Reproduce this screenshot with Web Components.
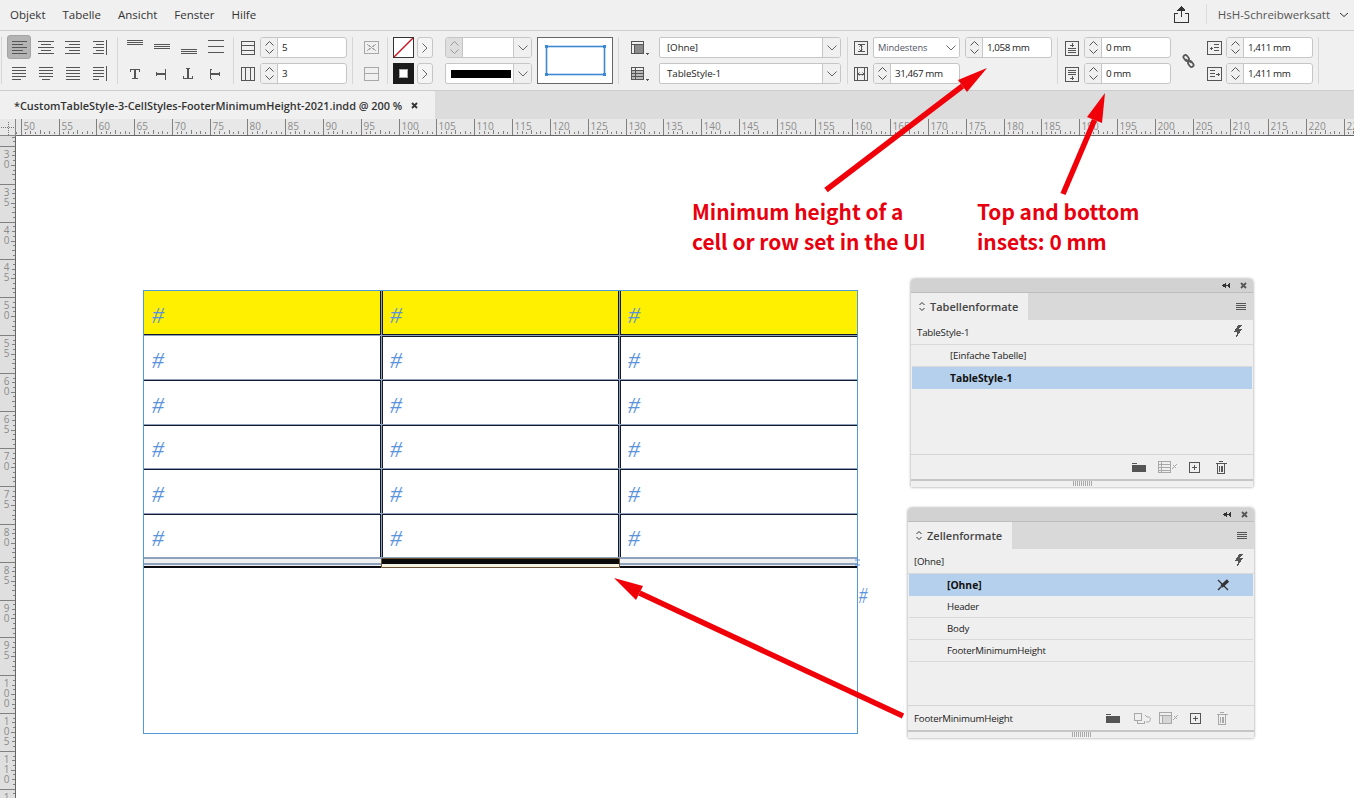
<!DOCTYPE html>
<html lang="de">
<head>
<meta charset="utf-8">
<title>InDesign</title>
<style>
  html, body { margin: 0; padding: 0; height: 100%; overflow: hidden; background: #fff; }
  body { font-family: "Open Sans", "Liberation Sans", sans-serif; font-size: 11px; color: #222; }
</style>
</head>
<body>
<id-app></id-app>
<script>
const bars = rows => `<path d="${rows.map(([a, b, y]) => `M${a} ${y}H${b}`).join('')}"/>`
const ys = [4.5, 7.5, 10.5, 13.5, 16.5]
const alt = (a1, b1, a2, b2) => bars(ys.map((y, i) => i % 2 ? [a2, b2, y] : [a1, b1, y]))
const just = (a, b, la, lb) => bars(ys.map((y, i) => i === 4 ? [la, lb, y] : [a, b, y]))
const chev = (d) => `<path style="shape-rendering:auto" d="${d}"/>`

const icons = {
  'al-left': alt(6, 21, 6, 17),
  'al-center': alt(5, 21, 8, 18),
  'al-right': alt(5, 20, 9, 20),
  'al-spine': alt(6, 17, 9, 17) + '<path d="M19.5 3V18"/>',
  'ju-left': just(6, 20, 6, 15),
  'ju-center': just(6, 20, 9, 17),
  'ju-all': just(6, 20, 6, 20),
  'ju-spine': just(6, 17, 6, 12) + '<path d="M19.5 3V18"/>',
  'va-top': bars([[5, 21, 3.5], [5, 21, 5.5], [5, 21, 7.5]]),
  'va-mid': bars([[5, 21, 7.5], [5, 21, 9.5], [5, 21, 11.5]]),
  'va-bot': bars([[5, 21, 12.5], [5, 21, 14.5], [5, 21, 16.5]]),
  'va-just': bars([[5, 21, 3.5], [5, 21, 9.5], [5, 21, 15.5]]),
  'rot-0': '<path stroke-width="1.6" d="M8 6.5H18M13 6.5V15"/><path d="M10 15.5H16M8.5 6V9M17.5 6V9"/>',
  'rot-90': '<path stroke-width="1.6" d="M8 11H17"/><path d="M16.5 6V16M7.5 9V13M16 6H17M16 16H17"/>',
  'rot-180': '<path stroke-width="1.6" d="M12 6V15"/><path d="M7 15.5H17M10 5.5H14M7.5 13V15M16.5 13V15"/>',
  'rot-270': '<path stroke-width="1.6" d="M8 11H17"/><path d="M7.5 6V16M16.5 9V13M8 6H9M8 16H9"/>',
  rows: '<path d="M5.5 4.5H18.5V17.5H5.5ZM5.5 8.5H18.5M5.5 13.5H18.5"/>',
  cols: '<path d="M5.5 4.5H18.5V17.5H5.5ZM9.5 4.5V17.5M14.5 4.5V17.5"/>',
  merge: '<path d="M11.5 4.5H25.5V16.5H11.5ZM14 7L23 14M23 7L14 14"/>',
  split: '<path d="M11.5 4.5H25.5V17.5H11.5ZM11.5 10.5H25.5"/>',
  'cell-style': '<path d="M5.5 4.5H17.5V16.5H5.5ZM5.5 7.5H17.5M8.5 7.5V16.5"/><rect x="9" y="8" width="8" height="8" fill="currentColor" opacity=".65" stroke="none"/><path d="M20 16.5H23M21 17.5H22"/>',
  'table-style': '<path d="M5.5 4.5H17.5V16.5H5.5ZM5.5 7.5H17.5M5.5 10.5H17.5M5.5 13.5H17.5M9.5 4.5V16.5"/><rect x="6" y="8" width="11" height="8" fill="currentColor" opacity=".35" stroke="none"/><path d="M20 16.5H23M21 17.5H22"/>',
  'row-h': '<path d="M1.5 4.5H14.5V17.5H1.5ZM4.5 7.5H11.5M4.5 14.5H11.5M8 8V14"/><path style="shape-rendering:auto" d="M6.5 9.5L8 8L9.5 9.5M6.5 12.5L8 14L9.5 12.5"/>',
  'col-w': '<path d="M1.5 4.5H14.5V17.5H1.5ZM4.5 4.5V17.5M11.5 4.5V17.5M5 11H11"/><path style="shape-rendering:auto" d="M6.5 9.5L5 11L6.5 12.5M9.5 9.5L11 11L9.5 12.5"/>',
  'in-top': '<path d="M2.5 4.5H15.5V18.5H2.5ZM5 11.5H13M5 13.5H13M5 15.5H13M7 8H11M9 6V10"/>',
  'in-bot': '<path d="M2.5 4.5H15.5V18.5H2.5ZM5 7.5H13M5 9.5H13M5 11.5H13M7 15H11M9 13V17"/>',
  'in-left': '<path d="M2.5 4.5H16.5V17.5H2.5ZM9 7.5H14M9 10.5H14M9 13.5H14M4.5 11H8M6 9.5V12.5"/>',
  'in-right': '<path d="M2.5 4.5H16.5V17.5H2.5ZM5 7.5H10M5 10.5H10M5 13.5H10M11 11H15M13 9.5V12.5"/>',
  link: '<g style="shape-rendering:auto" stroke-width="1.7"><g transform="rotate(-38 6.5 8)"><rect x="4.5" y="1" width="4" height="6.5" rx="2"/><rect x="4.5" y="8.5" width="4" height="6.5" rx="2"/></g><path stroke-width="1.2" d="M3.5 6L9.5 10"/></g>',
  share: '<g stroke-width="1.6"><path d="M5 7.5H1.5V16.5H15.5V7.5H12M8.5 11V1.5"/></g><path fill="currentColor" stroke="none" d="M8.5 0L12.5 4.5H4.5Z"/>',
  'chev-d': chev('M1 1L5 4.5L9 1'),
  updown: chev('M1.5 4L4 1.5L6.5 4M1.5 7L4 9.5L6.5 7'),
  collapse: '<path fill="currentColor" stroke="none" d="M3.5 0L0 2.5L3.5 5ZM8 0L4.5 2.5L8 5Z"/>',
  close: '<path style="shape-rendering:auto" stroke-width="1.8" d="M1 1L6 6M6 1L1 6"/>',
  menu: '<path d="M0 .5H10M0 2.5H10M0 4.5H10M0 6.5H10"/>',
  bolt: '<path fill="currentColor" stroke="none" d="M5 0L9 0L6.5 3.5L9.5 3.5L2.5 14L4.5 7L1 7Z"/>',
  'pen-x': '<path style="shape-rendering:auto" stroke-width="1.2" d="M1 1L11 11"/><path style="shape-rendering:auto" stroke-width="3.2" d="M11 1.5L4.5 7.5"/><path style="shape-rendering:auto" stroke-width="1.4" d="M4.5 7.5L1 11"/>',
  folder: '<path fill="currentColor" stroke="none" d="M1 3H15V10H1Z"/><path d="M1 1.5H6"/>',
  'clear-t': '<path d="M.5 .5H12.5V11.5H.5ZM.5 3.5H12.5M.5 6.5H12.5M.5 9.5H12.5M3.5 .5V11.5"/><path style="shape-rendering:auto" d="M14 8L19 3M15 4L18 7"/>',
  'clear-c': '<path d="M.5 .5H12.5V11.5H.5ZM.5 3.5H12.5M3.5 3.5V11.5"/><rect x="4" y="4" width="8" height="7" fill="currentColor" opacity=".35" stroke="none"/><path style="shape-rendering:auto" d="M14 8L19 3M15 4L18 7"/>',
  undo: '<path d="M.5 .5H7.5V7.5H.5ZM3.5 7.5V10.5H10.5V7.5"/><path style="shape-rendering:auto" d="M11 2L13 4L15 4C17 4 17 9 14 9H12"/>',
  plus: '<path d="M.5 .5H10.5V10.5H.5ZM3 5.5H8M5.5 3V8"/>',
  trash: '<path d="M.5 2.5H11.5M2.5 2.5V12.5H9.5V2.5M4 .5H8M4.5 4.5V10.5M6 4.5V10.5M7.5 4.5V10.5"/>'
}

customElements.define('id-icon', class extends HTMLElement {
  constructor() {
    super()
    const w = this.getAttribute('w') || 27
    const h = this.getAttribute('h') || 21
    this.attachShadow({ mode: 'open' })
    this.shadowRoot.innerHTML = `
    <style>
      :host { display: block; position: relative; width: ${w}px; height: ${h}px; color: #555; }
      :host([dim]) { color: #a8a8a8; }
      :host([dark]) { color: #333; }
      :host([active])::before {
        content: ""; position: absolute; left: 1px; top: -2px; width: 24px; height: 24px;
        background: #b4b4b4; border: 1px solid #a4a4a4; border-radius: 3px; box-sizing: border-box;
      }
      svg { position: absolute; left: 0; top: 0; display: block; overflow: visible; fill: none; stroke: currentColor; stroke-width: 1; shape-rendering: crispEdges; }
    </style>
    <svg width="${w}" height="${h}" viewBox="0 0 ${w} ${h}">${icons[this.getAttribute('name')] || ''}</svg>`
  }
})

customElements.define('id-spin', class extends HTMLElement {
  constructor() {
    super()
    this.attachShadow({ mode: 'open' })
    const drop = this.hasAttribute('drop') ? '<div class="d"><svg width="10" height="6" viewBox="0 0 10 6"><path d="M.5 .5L5 5L9.5 .5"/></svg></div>' : ''
    this.shadowRoot.innerHTML = `
    <style>
      :host { display: flex; width: 87px; height: 21px; box-sizing: border-box; border: 1px solid #c6c6c6; border-radius: 3px; background: #fff; overflow: hidden; }
      .s { width: 16px; flex: none; background: #f0f0f0; border-right: 1px solid #c6c6c6; display: flex; flex-direction: column; align-items: center; justify-content: center; gap: 3px; color: #555; }
      :host([disabled]) .s { background: #dedede; color: #999; }
      .s svg { display: block; fill: none; stroke: currentColor; }
      .v { flex: 1; padding-left: 4px; font: 500 9.8px/19px "Open Sans", sans-serif; letter-spacing: -.4px; color: #222; white-space: nowrap; }
      .d { width: 17px; flex: none; background: #f0f0f0; border-left: 1px solid #c6c6c6; display: grid; place-items: center; }
      .d svg { display: block; fill: none; stroke: #666; }
    </style>
    <div class="s">
      <svg width="9" height="5" viewBox="0 0 9 5"><path d="M.5 4.5L4.5 .5L8.5 4.5"/></svg>
      <svg width="9" height="5" viewBox="0 0 9 5"><path d="M.5 .5L4.5 4.5L8.5 .5"/></svg>
    </div>
    <div class="v">${this.getAttribute('value') || ''}</div>${drop}`
  }
})

customElements.define('id-select', class extends HTMLElement {
  constructor() {
    super()
    this.attachShadow({ mode: 'open' })
    this.shadowRoot.innerHTML = `
    <style>
      :host { display: flex; height: 21px; box-sizing: border-box; border: 1px solid #c6c6c6; border-radius: 2px 3px 3px 2px; background: #fff; overflow: hidden; }
      .v { flex: 1; padding-left: var(--pad, 7px); font: var(--size, 9.8px)/19px "Open Sans", sans-serif; letter-spacing: -.1px; color: var(--ink, #222); white-space: nowrap; display: flex; align-items: center; }
      .d { width: 17px; flex: none; background: #f0f0f0; border-left: 1px solid #c6c6c6; display: grid; place-items: center; }
      :host([plain]) .d { border-left: 0; background: #fff; }
      svg { display: block; fill: none; stroke: #666; }
    </style>
    <div class="v"><slot>${this.getAttribute('value') || ''}</slot></div>
    <div class="d"><svg width="10" height="6" viewBox="0 0 10 6"><path d="M.5 .5L5 5L9.5 .5"/></svg></div>`
  }
})

customElements.define('id-group', class extends HTMLElement {
  constructor() {
    super()
    this.attachShadow({ mode: 'open' })
    this.shadowRoot.innerHTML = `
    <style>
      :host { display: grid; grid-template-rows: 21px 21px; row-gap: 5px; flex: none; box-sizing: border-box; height: 47px; border-left: 1px solid #d6d6d6; align-items: center; }
    </style>
    <slot></slot>`
    this.style.gridTemplateColumns = this.getAttribute('cols')
    this.style.paddingLeft = (this.getAttribute('pad') || 0) + 'px'
    this.style.width = this.getAttribute('w') + 'px'
    this.style.columnGap = (this.getAttribute('gap') || 0) + 'px'
  }
})

customElements.define('id-menubar', class extends HTMLElement {
  constructor() {
    super()
    this.attachShadow({ mode: 'open' })
    this.shadowRoot.innerHTML = `
    <style>
      :host { display: flex; align-items: center; height: 31px; box-sizing: border-box; background: #f0f0f0; border-bottom: 1px solid #cdcdcd; padding: 0 0 2px 10px; font-size: 11.5px; color: #333; }
      nav { display: flex; gap: 17px; }
      .right { margin-left: auto; display: flex; align-items: center; height: 100%; color: #555; }
      .sep { width: 1px; height: 20px; background: #dcdcdc; margin: 0 11px 0 16px; }
      .chev { margin: 1px 5px 0 9px; }
    </style>
    <nav><slot></slot></nav>
    <div class="right">
      <id-icon name="share" w="17" h="17" dark></id-icon>
      <div class="sep"></div>
      <span>HsH-Schreibwerksatt</span>
      <id-icon class="chev" name="chev-d" w="10" h="6" dark></id-icon>
    </div>`
  }
})

customElements.define('id-swatch', class extends HTMLElement {
  constructor() {
    super()
    this.attachShadow({ mode: 'open' })
    const none = this.hasAttribute('none')
    this.shadowRoot.innerHTML = `
    <style>
      :host { display: block; width: 21px; height: 21px; }
      svg { display: block; }
    </style>
    <svg width="21" height="21" viewBox="0 0 21 21">${none
      ? '<rect x=".5" y=".5" width="20" height="20" fill="#fff" stroke="#333"/><path d="M1 20L20 1" stroke="#c8141e" stroke-width="1.4"/>'
      : '<rect width="21" height="21" fill="#1a1a1a"/><rect x="6.5" y="6.5" width="8" height="8" fill="#fff" stroke="#aaa"/>'}</svg>`
  }
})

customElements.define('id-more', class extends HTMLElement {
  constructor() {
    super()
    this.attachShadow({ mode: 'open' })
    this.shadowRoot.innerHTML = `
    <style>
      :host { display: grid; place-items: center; width: 16px; height: 21px; box-sizing: border-box; border: 1px solid #c6c6c6; border-radius: 3px; background: #f4f4f4; }
      svg { display: block; fill: none; stroke: #666; }
    </style>
    <svg width="6" height="10" viewBox="0 0 6 10"><path d="M.5 .5L5 5L.5 9.5"/></svg>`
  }
})

customElements.define('id-preview', class extends HTMLElement {
  constructor() {
    super()
    this.attachShadow({ mode: 'open' })
    this.shadowRoot.innerHTML = `
    <style>
      :host { display: block; width: 76px; height: 47px; box-sizing: border-box; border: 1px solid #666; background: #fff; }
      svg { display: block; }
    </style>
    <svg width="74" height="45" viewBox="0 0 74 45">
      <rect x="8.5" y="8.5" width="58" height="28" fill="none" stroke="#3e88d2" stroke-width="1.6"/>
      <g fill="#3e88d2"><rect x="7" y="7" width="3" height="3"/><rect x="65" y="7" width="3" height="3"/><rect x="7" y="35" width="3" height="3"/><rect x="65" y="35" width="3" height="3"/></g>
    </svg>`
  }
})

customElements.define('id-controlbar', class extends HTMLElement {
  constructor() {
    super()
    this.attachShadow({ mode: 'open' })
    this.shadowRoot.innerHTML = `
    <style>
      :host { display: flex; height: 60px; box-sizing: border-box; padding: 6px 0 0 1px; background: #f0f0f0; border-bottom: 1px solid #cdcdcd; }
      .stroke-bar { display: block; margin-left: -2px; width: 60px; height: 8px; background: #000; }
    </style>
    <id-group w="116" pad="4" cols="repeat(4, 27px)">
      <id-icon name="al-left" active></id-icon><id-icon name="al-center"></id-icon><id-icon name="al-right"></id-icon><id-icon name="al-spine"></id-icon>
      <id-icon name="ju-left"></id-icon><id-icon name="ju-center"></id-icon><id-icon name="ju-all"></id-icon><id-icon name="ju-spine"></id-icon>
    </id-group>
    <id-group w="116" pad="4" cols="repeat(4, 27px)">
      <id-icon name="va-top"></id-icon><id-icon name="va-mid"></id-icon><id-icon name="va-bot"></id-icon><id-icon name="va-just"></id-icon>
      <id-icon name="rot-0"></id-icon><id-icon name="rot-90"></id-icon><id-icon name="rot-180"></id-icon><id-icon name="rot-270"></id-icon>
    </id-group>
    <id-group w="119" pad="2" gap="2" cols="22px 87px">
      <id-icon name="rows" w="22"></id-icon><id-spin value="5"></id-spin>
      <id-icon name="cols" w="22"></id-icon><id-spin value="3"></id-spin>
    </id-group>
    <id-group w="35" cols="34px">
      <id-icon name="merge" w="34" dim></id-icon>
      <id-icon name="split" w="34" dim></id-icon>
    </id-group>
    <id-group w="231" pad="5" cols="21px 3px 16px 12px 87px 5px 76px">
      <id-swatch none style="grid-area:1 / 1"></id-swatch>
      <id-more style="grid-area:1 / 3"></id-more>
      <id-spin disabled drop style="grid-area:1 / 5"></id-spin>
      <id-preview style="grid-area:1 / 7 / 3 / 8"></id-preview>
      <id-swatch style="grid-area:2 / 1"></id-swatch>
      <id-more style="grid-area:2 / 3"></id-more>
      <id-select style="grid-area:2 / 5"><span class="stroke-bar"></span></id-select>
    </id-group>
    <id-group w="229" pad="7" gap="9" cols="24px 182px">
      <id-icon name="cell-style" w="24"></id-icon><id-select value="[Ohne]"></id-select>
      <id-icon name="table-style" w="24"></id-icon><id-select value="TableStyle-1"></id-select>
    </id-group>
    <id-group w="210" pad="5" cols="20px 92px 87px">
      <id-icon name="row-h" w="16"></id-icon><id-select value="Mindestens" plain style="width:87px;--pad:4px;--ink:#556;--size:9.3px"></id-select><id-spin value="1,058 mm"></id-spin>
      <id-icon name="col-w" w="16"></id-icon><id-spin value="31,467 mm"></id-spin>
    </id-group>
    <id-group w="261" pad="5" gap="3" cols="18px 87px 28px 18px 87px">
      <id-icon name="in-top" w="18" style="grid-area:1 / 1"></id-icon><id-spin value="0 mm" style="grid-area:1 / 2"></id-spin>
      <id-icon name="link" w="13" h="16" style="grid-area:1 / 3 / 3 / 4;justify-self:center"></id-icon>
      <id-icon name="in-left" w="18" style="grid-area:1 / 4"></id-icon><id-spin value="1,411 mm" style="grid-area:1 / 5"></id-spin>
      <id-icon name="in-bot" w="18" style="grid-area:2 / 1"></id-icon><id-spin value="0 mm" style="grid-area:2 / 2"></id-spin>
      <id-icon name="in-right" w="18" style="grid-area:2 / 4"></id-icon><id-spin value="1,411 mm" style="grid-area:2 / 5"></id-spin>
    </id-group>
    <id-group w="1" cols="1px"></id-group>`
  }
})

customElements.define('id-tabbar', class extends HTMLElement {
  constructor() {
    super()
    this.attachShadow({ mode: 'open' })
    this.shadowRoot.innerHTML = `
    <style>
      :host { display: flex; height: 28px; background: #dcdcdc; }
      .tab { width: 435px; box-sizing: border-box; padding-left: 14px; background: #f0f0f0; display: flex; align-items: center; font: 600 10.9px "Open Sans", sans-serif; color: #333; white-space: nowrap; }
      id-icon { margin-left: 9px; }
    </style>
    <div class="tab"><slot></slot><id-icon name="close" w="7" h="7" dark></id-icon></div>`
  }
})

customElements.define('id-ruler', class extends HTMLElement {
  constructor() {
    super()
    this.attachShadow({ mode: 'open' })
    const vertical = this.hasAttribute('vertical')
    const start = +this.getAttribute('start')
    const first = +this.getAttribute('first')
    const count = +this.getAttribute('count')
    const step = 37.8
    let ticks = ''
    let labels = ''
    for (let k = -1; k < count; k++) {
      const pos = Math.round(first + k * step) + .5
      if (vertical) {
        ticks += `M0 ${pos}H16`
        if (k >= 0) labels += `<text class="v" x="6.5" y="${pos}">${start + k * 5}</text>`
      } else {
        ticks += `M${pos} 0V16`
        if (k >= 0) labels += `<text x="${pos + 2}" y="10.5">${start + k * 5}</text>`
      }
      for (let i = 1; i < 8; i++) {
        const p = Math.round(first + (k + i / 8) * step) + .5
        const len = i === 4 ? 4 : i % 2 ? 2 : 3
        ticks += vertical ? `M${15 - len} ${p}H15` : `M${p} ${15 - len}V15`
      }
    }
    this.shadowRoot.innerHTML = `
    <style>
      :host { display: block; overflow: hidden; background: ${vertical ? '#dfdfdf' : '#e8e8e8'}; box-sizing: border-box; position: relative; }
      svg { display: block; font: 10px "Open Sans", sans-serif; }
      text { fill: #8c8c8c; }
      text.v { writing-mode: vertical-lr; text-orientation: upright; letter-spacing: -4px; }
      path { stroke: #808080; fill: none; shape-rendering: crispEdges; }
      .edge { stroke: #666; }
    </style>
    <svg width="${vertical ? 16 : 1338}" height="${vertical ? 662 : 17}">
      <path d="${ticks}"/>
      ${labels}
      <path class="edge" d="${vertical ? 'M15.5 0V662' : 'M0 16.5H1338'}"/>
    </svg>`
  }
})

customElements.define('id-table', class extends HTMLElement {
  constructor() {
    super()
    this.attachShadow({ mode: 'open' })
    const heights = [44, 43, 44, 43, 44, 43]
    let cells = ''
    heights.forEach((h, r) => {
      for (let c = 0; c < 3; c++) {
        cells += `<div class="cell c${c} ${r === 0 ? 'head' : ''} ${r === 1 ? 'second' : ''}"><span>#</span></div>`
      }
    })
    this.shadowRoot.innerHTML = `
    <style>
      :host { display: block; position: relative; width: 715px; height: 444px; box-sizing: border-box; border: 1px solid #4f9ad8; background: #fff; }
      .grid { display: grid; grid-template-columns: 237px 237px 237px; grid-template-rows: ${heights.join('px ')}px 10px; gap: 1px; background: #8ea2bd; }
      .cell { background: #fff; box-sizing: border-box; border-top: 1px solid #141a2c; padding: 4px 0 0 8px; display: flex; align-items: center; overflow: hidden; }
      .cell.head { background: #fff000; border-top: 0; border-bottom: 1px solid #141a2c; }
      .cell.second.c0 { border-top: 0; }
      .c0 { border-right: 1px solid #141a2c; }
      .c1 { border-left: 1px solid #141a2c; border-right: 1px solid #141a2c; padding-left: 7px; }
      .c2 { border-left: 1px solid #141a2c; padding-left: 7px; }
      span { font: italic 24px/1 "Liberation Serif", serif; color: #5b94dc; }
      .foot { box-sizing: border-box; background: linear-gradient(#8ea2bd 0 1px, #eef0f2 1px 5px, #8ea2bd 5px 7px, #eef0f2 7px 8px, #0b0b12 8px 10px); }
      .foot.sel { background: linear-gradient(#0a0a0a 0 5px, #f6f2e4 5px 8px); border: 1px solid #6b5530; margin: 0 -1px; position: relative; border-radius: 1px; }
      svg { position: absolute; right: -3px; top: 265px; display: block; }
    </style>
    <div class="grid">
      ${cells}
      <div class="foot"></div><div class="foot sel"></div><div class="foot"></div>
    </div>
    <svg width="5" height="13"><path d="M2.5 0V13M0 4H5M0 9H5" stroke="#5b94dc" fill="none"/></svg>`
  }
})

customElements.define('id-panel', class extends HTMLElement {
  constructor() {
    super()
    this.attachShadow({ mode: 'open' })
    this.shadowRoot.innerHTML = `
    <style>
      :host { display: flex; flex-direction: column; position: absolute; box-sizing: border-box; background: #efefef; border-radius: 4px 4px 0 0; box-shadow: 0 0 3px rgba(0, 0, 0, .45); overflow: hidden; }
      .strip { height: 14px; flex: none; background: #d2d2d2; display: flex; align-items: center; justify-content: flex-end; padding-right: 6px; gap: 10px; border-bottom: 1px solid #bdbdbd; box-sizing: border-box; }
      .tabs { height: 27px; flex: none; display: flex; background: #d9d9d9; align-items: stretch; }
      .tab { display: flex; align-items: center; gap: 4px; padding: 0 10px 0 7px; background: #efefef; font: 600 11px "Open Sans", sans-serif; color: #444; }
      .menu { margin: 10px 7px 0 auto; }
      .cur { height: 25px; flex: none; box-sizing: border-box; display: flex; align-items: center; padding: 0 10px 0 6px; font-size: 9.7px; letter-spacing: -.2px; color: #222; border-bottom: 1px solid #d9d9d9; justify-content: space-between; }
      .list { flex: 1; background: #efefef; padding: 0 1px; }
      .foot { height: 25px; flex: none; box-sizing: border-box; border-top: 1px solid #d4d4d4; display: flex; align-items: center; justify-content: flex-end; padding: 0 22px 0 6px; gap: 11px; font-size: 9.7px; letter-spacing: -.2px; color: #222; }
      .grip { height: 8px; flex: none; box-sizing: border-box; border-top: 2px solid #c6c6c6; background: #f0f0f0; display: flex; justify-content: center; }
      .grip i { width: 19px; height: 5px; background: repeating-linear-gradient(90deg, #aaa 0 1px, transparent 1px 2px); }
    </style>
    <div class="strip"><id-icon name="collapse" w="8" h="5" dark></id-icon><id-icon name="close" w="7" h="7"></id-icon></div>
    <div class="tabs">
      <div class="tab"><id-icon name="updown" w="8" h="11" dark></id-icon>${this.getAttribute('heading')}</div>
      <id-icon class="menu" name="menu" w="10" h="7"></id-icon>
    </div>
    <div class="cur"><span>${this.getAttribute('current')}</span><id-icon name="bolt" w="10" h="14"></id-icon></div>
    <div class="list"><slot></slot></div>
    <div class="foot"><slot name="foot"></slot></div>
    <div class="grip"><i></i></div>`
  }
})

customElements.define('id-row', class extends HTMLElement {
  constructor() {
    super()
    this.attachShadow({ mode: 'open' })
    this.shadowRoot.innerHTML = `
    <style>
      :host { display: flex; align-items: center; height: 22px; box-sizing: border-box; padding: 0 24px 0 38px; font-size: 9.7px; letter-spacing: -.2px; color: #222; border-bottom: 1px solid #d9d9d9; }
      :host([selected]) { background: #b5d0ec; font-size: 10.3px; letter-spacing: 0; font-weight: 700; border-bottom: 0; color: #111; }
      ::slotted(id-icon) { margin-left: auto; }
    </style>
    <slot></slot>`
  }
})

customElements.define('id-note', class extends HTMLElement {
  constructor() {
    super()
    this.attachShadow({ mode: 'open' })
    this.shadowRoot.innerHTML = `
    <style>
      :host { display: block; position: absolute; font: 700 20.9px/30px "Noto Sans CJK SC", "Noto Sans", sans-serif; color: #e8000e; white-space: nowrap; }
    </style>
    <slot></slot>`
  }
})

customElements.define('id-arrows', class extends HTMLElement {
  constructor() {
    super()
    this.attachShadow({ mode: 'open' })
    const arrow = (x1, y1, x2, y2, a, b) => `
      <path d="M${x1} ${y1}L${(a[0] + b[0]) / 2} ${(a[1] + b[1]) / 2}" stroke="#f00008" stroke-width="5.5"/>
      <path d="M${x2} ${y2}L${a[0]} ${a[1]}L${b[0]} ${b[1]}Z" fill="#f00008"/>`
    this.shadowRoot.innerHTML = `
    <style>
      :host { display: block; position: absolute; left: 0; top: 0; pointer-events: none; }
      svg { display: block; }
    </style>
    <svg width="1354" height="798">
      ${arrow(826, 190, 987, 68, [958, 80], [967, 92])}
      ${arrow(1063, 194, 1105, 93, [1087, 117], [1102, 123])}
      ${arrow(903, 716, 614, 578, [643, 586], [636, 600])}
    </svg>`
  }
})

customElements.define('id-workspace', class extends HTMLElement {
  constructor() {
    super()
    this.attachShadow({ mode: 'open' })
    this.shadowRoot.innerHTML = `
    <style>
      :host { display: grid; grid-template-columns: 16px 1fr; grid-template-rows: 17px 1fr; height: 679px; overflow: hidden; }
      .corner { background: #e8e8e8; border-right: 1px solid #888; border-bottom: 1px solid #888; box-sizing: border-box; }
      .corner svg { display: block; }
      .canvas { position: relative; background: #fff; overflow: hidden; }
      id-table { position: absolute; left: 127px; top: 154px; }
      .over { position: absolute; left: 841px; top: 447px; transform: scaleX(.72); font: italic 24px/1 "Liberation Serif", serif; color: #5b94dc; }
      .p1 { left: 895px; top: 143px; width: 342px; height: 208px; }
      .p2 { left: 892px; top: 372px; width: 346px; height: 230px; }
      .n1 { left: 676px; top: 60px; }
      .n2 { left: 961px; top: 60px; }
    </style>
    <div class="corner"><svg width="15" height="16"><path d="M1 8.5H15M8.5 3V16" stroke="#777" stroke-dasharray="1 1" fill="none"/></svg></div>
    <id-ruler start="50" first="4.7" count="36"></id-ruler>
    <id-ruler vertical start="30" first="10" count="18"></id-ruler>
    <div class="canvas">
      <id-table></id-table>
      <div class="over">#</div>
      <id-note class="n1">Minimum height of a<br>cell or row set in the UI</id-note>
      <id-note class="n2">Top and bottom<br>insets: 0 mm</id-note>
      <id-panel class="p1" heading="Tabellenformate" current="TableStyle-1">
        <id-row>[Einfache Tabelle]</id-row>
        <id-row selected>TableStyle-1</id-row>
        <id-icon slot="foot" name="folder" w="16" h="11"></id-icon>
        <id-icon slot="foot" name="clear-t" w="20" h="12" dim></id-icon>
        <id-icon slot="foot" name="plus" w="15" h="11"></id-icon>
        <id-icon slot="foot" name="trash" w="16" h="13"></id-icon>
      </id-panel>
      <id-panel class="p2" heading="Zellenformate" current="[Ohne]">
        <id-row selected>[Ohne]<id-icon name="pen-x" w="12" h="12" dark></id-icon></id-row>
        <id-row>Header</id-row>
        <id-row>Body</id-row>
        <id-row>FooterMinimumHeight</id-row>
        <span slot="foot" style="margin-right:auto">FooterMinimumHeight</span>
        <id-icon slot="foot" name="folder" w="16" h="11"></id-icon>
        <id-icon slot="foot" name="undo" w="18" h="11" dim style="margin-left:2px"></id-icon>
        <id-icon slot="foot" name="clear-c" w="20" h="12" dim style="margin-left:-4px"></id-icon>
        <id-icon slot="foot" name="plus" w="15" h="11"></id-icon>
        <id-icon slot="foot" name="trash" w="16" h="13" dim></id-icon>
      </id-panel>
    </div>`
  }
})

customElements.define('id-app', class extends HTMLElement {
  constructor() {
    super()
    this.attachShadow({ mode: 'open' })
    this.shadowRoot.innerHTML = `
    <style>
      :host { display: block; position: relative; width: 1354px; height: 798px; overflow: hidden; }
    </style>
    <id-menubar>
      <span>Objekt</span><span>Tabelle</span><span>Ansicht</span><span>Fenster</span><span>Hilfe</span>
    </id-menubar>
    <id-controlbar></id-controlbar>
    <id-tabbar>*CustomTableStyle-3-CellStyles-FooterMinimumHeight-2021.indd @ 200 %</id-tabbar>
    <id-workspace></id-workspace>
    <id-arrows></id-arrows>`
  }
})
</script>
</body>
</html>
